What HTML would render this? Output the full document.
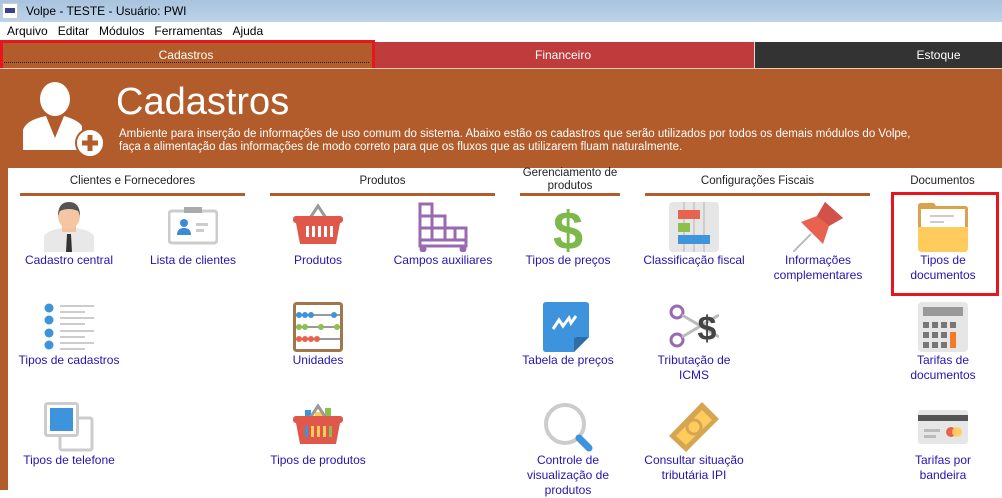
<!DOCTYPE html>
<html><head><meta charset="utf-8"><style>
*{margin:0;padding:0;box-sizing:border-box}
body{width:1002px;height:490px;overflow:hidden;background:#fff;font-family:"Liberation Sans",sans-serif;position:relative}
.a{position:absolute}
.title{left:0;top:0;width:1002px;height:22px;background:linear-gradient(#a9c3de,#bcd3ea);font-size:12px;color:#000;line-height:22px;padding-left:26px}
.menu{left:0;top:22px;width:1002px;height:19px;background:#fff;font-size:12px;line-height:19px}
.menu span{margin-left:7px;margin-right:3px}
.tab{top:42px;height:26px;color:#fff;font-size:12px;line-height:26px;text-align:center}
.hdr{left:0;top:68px;width:1002px;height:100px;background:#b35c2b;border-top:1px solid #e8cbb8}
.sec{font-size:11.5px;color:#222;text-align:center;top:175px}
.line{height:3px;background:#b35c2b;top:193px}
.lbl{font-size:12px;color:#2414b0;text-align:center;width:130px;line-height:15px}
.ic{width:50px;height:50px}
</style></head><body>
<div class="a title">Volpe - TESTE - Usuário: PWI</div>
<div class="a" style="left:2px;top:3px;width:16px;height:16px;background:#fff;border:1px solid #ccc"><div style="margin:4px 2px;height:5px;background:#34458a"></div></div>
<div class="a menu"><span>Arquivo</span><span>Editar</span><span>Módulos</span><span>Ferramentas</span><span>Ajuda</span></div>
<div class="a tab" style="left:0;width:372px;background:#b35c2b">Cadastros</div>
<div class="a" style="left:4px;top:62px;width:365px;border-top:1px dotted #222"></div>
<div class="a tab" style="left:372px;width:382px;background:#c03c3c">Financeiro</div>
<div class="a tab" style="left:754px;width:248px;background:#333;border-left:1px solid #ddd;padding-left:120px">Estoque</div>
<div class="a" style="left:0;top:40px;width:375px;height:34px;border:3px solid #e8141e"></div>
<div class="a hdr"></div>
<div class="a" style="left:0;top:168px;width:8px;height:322px;background:#b35c2b"></div>
<svg class="a" style="left:20px;top:82px" width="84" height="78" viewBox="0 0 84 78">
<ellipse cx="35" cy="17" rx="15" ry="17" fill="#fff"/>
<path d="M3 68 L3 48 Q6 38 26 34 L35 56 L44 34 Q58 38 62 44 L62 68Z" fill="#fff"/>
<path d="M33 37 L37 37 L38 40 L36 52 L35 54 L34 52 L32 40Z" fill="#b35c2b"/>
<circle cx="70" cy="61" r="14" fill="#fff" stroke="#b35c2b" stroke-width="2"/>
<rect x="62" y="58.5" width="16" height="5" fill="#b35c2b"/><rect x="67.5" y="53" width="5" height="16" fill="#b35c2b"/>
</svg>
<div class="a" style="left:116px;top:81px;font-size:38px;color:#fff;font-weight:300">Cadastros</div>
<div class="a" style="left:119px;top:128px;font-size:11.5px;color:#fff;line-height:13px">Ambiente para inserção de informações de uso comum do sistema. Abaixo estão os cadastros que serão utilizados por todos os demais módulos do Volpe,<br>faça a alimentação das informações de modo correto para que os fluxos que as utilizarem fluam naturalmente.</div>

<div class="a sec" style="left:20px;width:225px">Clientes e Fornecedores</div><div class="a line" style="left:20px;width:225px"></div>
<div class="a sec" style="left:270px;width:225px">Produtos</div><div class="a line" style="left:270px;width:225px"></div>
<div class="a sec" style="left:520px;width:100px;top:167px;line-height:13px">Gerenciamento de produtos</div><div class="a line" style="left:520px;width:100px"></div>
<div class="a sec" style="left:645px;width:225px">Configurações Fiscais</div><div class="a line" style="left:645px;width:225px"></div>
<div class="a sec" style="left:880px;width:125px">Documentos</div>

<svg class="a ic" style="left:44px;top:202px" viewBox="0 0 50 50"><path d="M0 50 L0 34 Q4 28 18 26 L32 26 Q46 28 50 34 L50 50Z" fill="#e8e8e8"/><rect x="18" y="20" width="14" height="10" fill="#f2c29c"/><ellipse cx="25" cy="14" rx="11" ry="13" fill="#f5c6a2"/><path d="M14 14 Q14 0 25 0 Q36 0 36 14 L34 9 Q25 5 16 9Z" fill="#555"/><path d="M23 32 L27 32 L28 50 L22 50Z" fill="#333"/></svg>
<svg class="a ic" style="left:168px;top:202px" viewBox="0 0 50 50"><rect x="1" y="9" width="48" height="32" rx="3" fill="#fff" stroke="#ccc" stroke-width="3"/><rect x="16" y="5" width="18" height="6" fill="#aaa"/><circle cx="16" cy="21" r="4" fill="#3d8ad6"/><path d="M9 33 Q9 26 16 26 Q23 26 23 33Z" fill="#3d8ad6"/><rect x="28" y="21" width="12" height="3" fill="#ccc"/><rect x="28" y="27" width="8" height="3" fill="#ccc"/></svg>
<svg class="a ic" style="left:293px;top:202px" viewBox="0 0 50 50"><path d="M17 16 L25 4 L33 16" stroke="#999" stroke-width="3" fill="none"/><rect x="0" y="14" width="50" height="7" rx="3" fill="#e0584a"/><path d="M3 21 L47 21 L43 42 L7 42Z" fill="#e0584a"/><g fill="#fff"><rect x="13" y="24" width="3" height="11"/><rect x="19" y="24" width="3" height="11"/><rect x="25" y="24" width="3" height="11"/><rect x="31" y="24" width="3" height="11"/><rect x="37" y="24" width="3" height="11"/></g></svg>
<svg class="a ic" style="left:418px;top:202px" viewBox="0 0 50 50" fill="none" stroke="#9a6ab0" stroke-width="3"><path d="M2 2 H14 V14 H2Z M2 14 H14 V26 H2Z M14 14 H27 V26 H14Z M2 26 H14 V38 H2Z M14 26 H27 V38 H14Z M27 26 H48 V38 H27Z M2 38 H48 V44 H2Z M37 26 V38"/><circle cx="5" cy="47" r="2" fill="#9a6ab0"/><circle cx="45" cy="47" r="2" fill="#9a6ab0"/></svg>
<svg class="a ic" style="left:543px;top:202px" viewBox="0 0 50 50"><text x="25" y="47" text-anchor="middle" font-size="54" font-weight="bold" fill="#7cb84a" font-family="Liberation Sans">$</text></svg>
<svg class="a ic" style="left:669px;top:202px" viewBox="0 0 50 50"><rect width="50" height="50" rx="4" fill="#e6e6e6"/><g fill="#ccc"><rect x="14" y="0" width="2" height="50"/><rect x="24" y="0" width="2" height="50"/><rect x="34" y="0" width="2" height="50"/></g><rect x="9" y="8" width="22" height="9" fill="#e8634f"/><rect x="9" y="21" width="12" height="9" fill="#8cbf4e"/><rect x="9" y="33" width="32" height="9" fill="#3e95dc"/></svg>
<svg class="a ic" style="left:793px;top:202px" viewBox="0 0 50 50"><path d="M0 50 L18 32" stroke="#bbb" stroke-width="2"/><path d="M8 20 L24 14 L32 0 L50 16 L36 24 L30 42Z" fill="#e8634f"/><path d="M24 14 L32 0 L50 16 L36 24Z" fill="#d2524a"/></svg>
<svg class="a ic" style="left:918px;top:202px" viewBox="0 0 50 50"><path d="M0 4 Q0 1 3 1 L16 1 L18 4 L47 4 Q50 4 50 7 L50 46 L0 46Z" fill="#d9a24e"/><rect x="3" y="7" width="44" height="26" fill="#fff"/><rect x="12" y="13" width="24" height="2" fill="#ccc"/><rect x="12" y="19" width="14" height="2" fill="#ccc"/><path d="M0 25 L50 25 L50 46 Q50 50 46 50 L4 50 Q0 50 0 46Z" fill="#fecb5c"/></svg>
<svg class="a ic" style="left:44px;top:302px" viewBox="0 0 50 50"><g fill="#3d93dc"><circle cx="5" cy="6" r="4.5"/><circle cx="5" cy="18" r="4.5"/><circle cx="5" cy="31" r="4.5"/><circle cx="5" cy="43" r="4.5"/></g><g fill="#ccc"><rect x="16" y="3" width="34" height="2"/><rect x="16" y="9" width="25" height="2"/><rect x="16" y="15" width="34" height="2"/><rect x="16" y="21" width="25" height="2"/><rect x="16" y="28" width="34" height="2"/><rect x="16" y="34" width="25" height="2"/><rect x="16" y="40" width="34" height="2"/><rect x="16" y="46" width="25" height="2"/></g></svg>
<svg class="a ic" style="left:293px;top:302px" viewBox="0 0 50 50"><rect x="1.5" y="1.5" width="47" height="47" rx="2" fill="#fff" stroke="#a0764a" stroke-width="3"/><g stroke="#999" stroke-width="2"><line x1="3" y1="13" x2="47" y2="13"/><line x1="3" y1="25" x2="47" y2="25"/><line x1="3" y1="37" x2="47" y2="37"/></g><g fill="#3d93dc"><circle cx="6" cy="13" r="3"/><circle cx="12" cy="13" r="3"/><circle cx="18" cy="13" r="3"/><circle cx="41" cy="13" r="3"/></g><g fill="#8cbf4e"><circle cx="6" cy="25" r="3"/><circle cx="12" cy="25" r="3"/><circle cx="28" cy="25" r="3"/><circle cx="44" cy="25" r="3"/></g><g fill="#e8634f"><circle cx="6" cy="37" r="3"/><circle cx="12" cy="37" r="3"/><circle cx="18" cy="37" r="3"/><circle cx="24" cy="37" r="3"/></g></svg>
<svg class="a ic" style="left:543px;top:302px" viewBox="0 0 50 50"><path d="M3 0 L43 0 Q46 0 46 3 L46 35 L31 50 L3 50 Q0 50 0 47 L0 3 Q0 0 3 0Z" fill="#3d93dc"/><path d="M31 50 L31 38 Q31 35 34 35 L46 35Z" fill="#2d6ea8"/><path d="M10 27 L16 18 L20 24 L26 16 L28 21 L33 14" stroke="#fff" stroke-width="3" fill="none"/></svg>
<svg class="a ic" style="left:669px;top:302px" viewBox="0 0 50 50"><circle cx="8" cy="10" r="6" fill="none" stroke="#9a6ab0" stroke-width="3"/><circle cx="8" cy="38" r="6" fill="none" stroke="#9a6ab0" stroke-width="3"/><path d="M13 13 L50 35 M13 35 L50 13" stroke="#bbb" stroke-width="3"/><text x="38" y="38" text-anchor="middle" font-size="34" font-weight="bold" fill="#444" font-family="Liberation Sans">$</text></svg>
<svg class="a ic" style="left:918px;top:302px" viewBox="0 0 50 50"><rect width="50" height="50" rx="4" fill="#e6e6e6"/><rect x="5" y="5" width="40" height="9" fill="#999"/><g fill="#777"><rect x="5" y="20" width="6" height="6"/><rect x="14" y="20" width="6" height="6"/><rect x="23" y="20" width="6" height="6"/><rect x="32" y="20" width="6" height="6"/><rect x="5" y="30" width="6" height="6"/><rect x="14" y="30" width="6" height="6"/><rect x="23" y="30" width="6" height="6"/><rect x="5" y="40" width="6" height="6"/><rect x="14" y="40" width="6" height="6"/><rect x="23" y="40" width="6" height="6"/></g><rect x="32" y="30" width="6" height="16" fill="#f47a2a"/></svg>
<svg class="a ic" style="left:44px;top:402px" viewBox="0 0 50 50"><rect x="16" y="16" width="32" height="32" rx="2" fill="#fff" stroke="#ccc" stroke-width="3"/><rect x="1.5" y="1.5" width="32" height="32" rx="2" fill="#fff" stroke="#ccc" stroke-width="3"/><rect x="6" y="6" width="23" height="23" fill="#3d93dc"/></svg>
<svg class="a ic" style="left:293px;top:402px" viewBox="0 0 50 50"><rect x="12" y="8" width="6" height="14" fill="#3d93dc"/><rect x="32" y="6" width="6" height="16" fill="#8cbf4e"/><rect x="22" y="10" width="8" height="10" fill="#fecb5c"/><path d="M17 16 L25 4 L33 16" stroke="#999" stroke-width="3" fill="none"/><rect x="0" y="14" width="50" height="7" rx="3" fill="#e0584a"/><path d="M3 21 L47 21 L43 42 L7 42Z" fill="#e0584a"/><rect x="12" y="24" width="3" height="11" fill="#3d93dc"/><rect x="18" y="24" width="3" height="11" fill="#fecb5c"/><rect x="24" y="24" width="3" height="11" fill="#fecb5c"/><rect x="30" y="24" width="3" height="11" fill="#fecb5c"/><rect x="36" y="24" width="3" height="11" fill="#8cbf4e"/></svg>
<svg class="a ic" style="left:543px;top:402px" viewBox="0 0 50 50"><circle cx="22" cy="22" r="19" fill="#fff" stroke="#ccc" stroke-width="4"/><path d="M36 36 L46 46" stroke="#3d93dc" stroke-width="7" stroke-linecap="round"/></svg>
<svg class="a ic" style="left:669px;top:402px" viewBox="0 0 50 50"><path d="M0 34 L33 0 L50 17 L17 50Z" fill="#d6a552"/><path d="M7 34 L33 8 L43 18 L17 43Z" fill="#fecb5c"/><circle cx="25" cy="25" r="7" fill="none" stroke="#d6a552" stroke-width="3"/></svg>
<svg class="a ic" style="left:918px;top:402px" viewBox="0 0 50 50"><rect x="0" y="8" width="50" height="34" rx="3" fill="#e6e6e6"/><rect x="0" y="13" width="50" height="6" fill="#555"/><rect x="6" y="27" width="16" height="3" fill="#bbb"/><rect x="6" y="33" width="12" height="3" fill="#bbb"/><circle cx="33" cy="30" r="5" fill="#e8634f"/><circle cx="39" cy="30" r="5" fill="#fecb5c" opacity=".9"/></svg>

<div class="a lbl" style="left:4px;top:253px">Cadastro central</div>
<div class="a lbl" style="left:128px;top:253px">Lista de clientes</div>
<div class="a lbl" style="left:253px;top:253px">Produtos</div>
<div class="a lbl" style="left:378px;top:253px">Campos auxiliares</div>
<div class="a lbl" style="left:503px;top:253px">Tipos de preços</div>
<div class="a lbl" style="left:629px;top:253px">Classificação fiscal</div>
<div class="a lbl" style="left:753px;top:253px">Informações complementares</div>
<div class="a lbl" style="left:878px;top:253px">Tipos de<br>documentos</div>
<div class="a lbl" style="left:4px;top:353px">Tipos de cadastros</div>
<div class="a lbl" style="left:253px;top:353px">Unidades</div>
<div class="a lbl" style="left:503px;top:353px">Tabela de preços</div>
<div class="a lbl" style="left:629px;top:353px">Tributação de<br>ICMS</div>
<div class="a lbl" style="left:878px;top:353px">Tarifas de<br>documentos</div>
<div class="a lbl" style="left:4px;top:453px">Tipos de telefone</div>
<div class="a lbl" style="left:253px;top:453px">Tipos de produtos</div>
<div class="a lbl" style="left:503px;top:453px">Controle de<br>visualização de<br>produtos</div>
<div class="a lbl" style="left:629px;top:453px">Consultar situação<br>tributária IPI</div>
<div class="a lbl" style="left:878px;top:453px">Tarifas por<br>bandeira</div>
<div class="a" style="left:891px;top:192px;width:108px;height:104px;border:3px solid #e8141e"></div>
</body></html>
